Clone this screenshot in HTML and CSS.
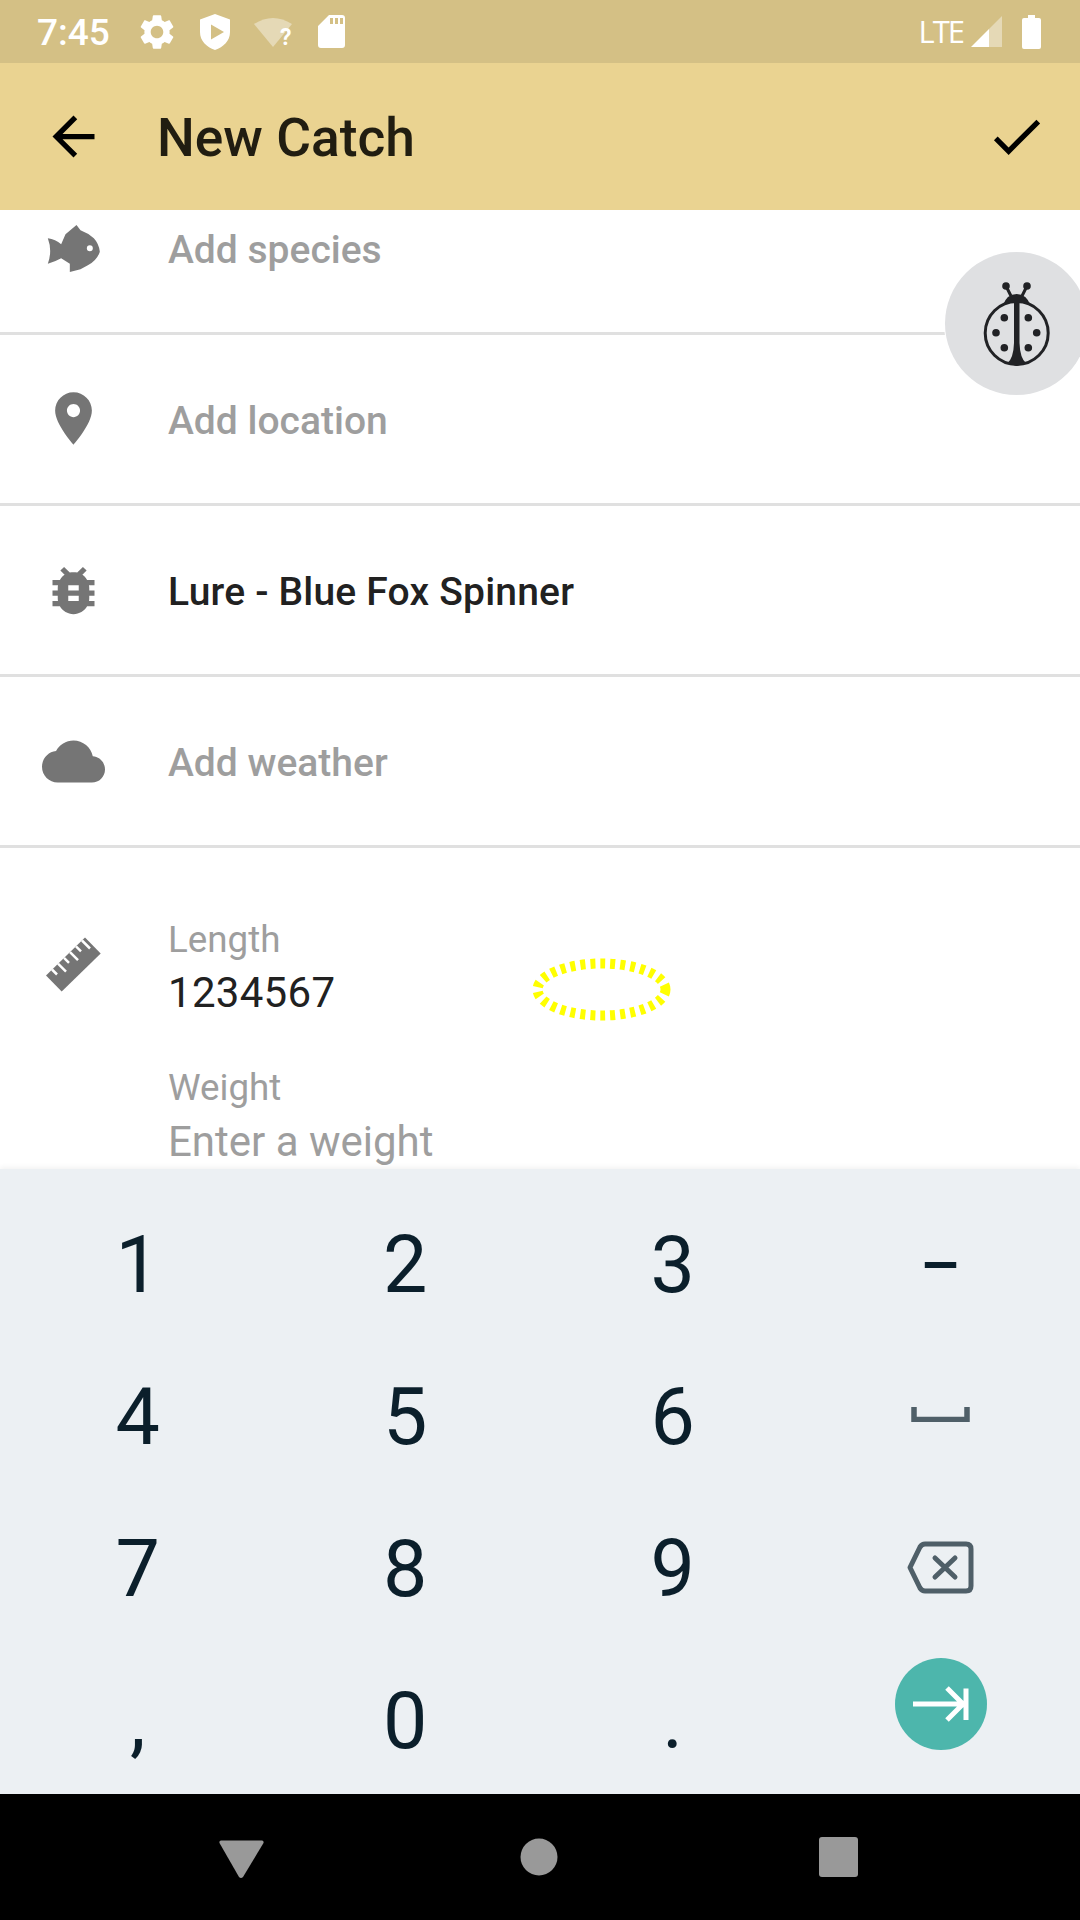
FILE: index.html
```html
<!DOCTYPE html>
<html lang="en">
<head>
    <meta charset="UTF-8">
    <meta name="viewport" content="width=device-width, initial-scale=1.0">
    <title>New Catch</title>
    <link rel="stylesheet" href="styles.css">
</head>
<body>
    <div class="screen">
        <div class="statusbar">
            <span class="time">7:45</span>
            <svg class="st-gear" viewBox="0 0 24 24"><path d="M19.14 12.94c.04-.3.06-.61.06-.94 0-.32-.02-.64-.07-.94l2.03-1.58c.18-.14.23-.41.12-.61l-1.92-3.32c-.12-.22-.37-.29-.59-.22l-2.39.96c-.5-.38-1.03-.7-1.62-.94l-.36-2.54c-.04-.24-.24-.41-.48-.41h-3.84c-.24 0-.43.17-.47.41l-.36 2.54c-.59.24-1.13.57-1.62.94l-2.39-.96c-.22-.08-.47 0-.59.22L2.74 8.87c-.12.21-.08.47.12.61l2.03 1.58c-.05.3-.09.63-.09.94s.02.64.07.94l-2.03 1.58c-.18.14-.23.41-.12.61l1.92 3.32c.12.22.37.29.59.22l2.39-.96c.5.38 1.03.7 1.62.94l.36 2.54c.05.24.24.41.48.41h3.84c.24 0 .44-.17.47-.41l.36-2.54c.59-.24 1.13-.56 1.62-.94l2.39.96c.22.08.47 0 .59-.22l1.92-3.32c.12-.22.07-.47-.12-.61l-2.01-1.58zM12 15.6c-1.98 0-3.6-1.62-3.6-3.6s1.62-3.6 3.6-3.6 3.6 1.62 3.6 3.6-1.62 3.6-3.6 3.6z"/></svg>
            <svg class="st-shield" viewBox="0 0 30 36"><path fill-rule="evenodd" d="M15 0L30 5.5V18C30 27 23.500 33 15 36C6.500 33 0 27 0 18V5.500ZM11 10.500V25.500L24 18Z"/></svg>
            <span class="st-wifi">
                <svg viewBox="0 0 38 30"><path opacity=".4" d="M0 7Q19-5 38 7L19 30Z"/></svg>
                <span class="wifi-q">?</span>
            </span>
            <svg class="st-sd" viewBox="0 0 27 33"><path fill-rule="evenodd" d="M11 0H24Q27 0 27 3V30Q27 33 24 33H3Q0 33 0 30V11ZM12 3V9H15V3ZM17 3V9H20V3ZM22 3V9H25V3Z"/></svg>
            <span class="lte">LTE</span>
            <svg class="st-signal" viewBox="0 0 31 31"><path opacity=".4" d="M18 13L31 0V31H18Z"/><path d="M0 31L18 13V31Z"/></svg>
            <svg class="st-battery" viewBox="0 0 19 34"><path d="M6 0H13V3H17Q19 3 19 5V32Q19 34 17 34H2Q0 34 0 32V5Q0 3 2 3H6Z"/></svg>
        </div>

        <div class="appbar">
            <svg class="back" viewBox="0 0 24 24"><path d="M20 11H7.830l5.590-5.590L12 4l-8 8 8 8 1.410-1.410L7.830 13H20v-2z"/></svg>
            <h1 class="title">New Catch</h1>
            <svg class="done" viewBox="0 0 24 24"><path d="M9 16.170L4.830 12l-1.420 1.410L9 19 21 7l-1.410-1.410z"/></svg>
        </div>

        <div class="content">
            <div class="list">
                <div class="row">
                    <svg class="icon" viewBox="0 0 63 63"><g transform="translate(-11.500 -6) scale(.3333)"><path fill-rule="evenodd" d="M52 82Q75 85 92 100L105 70L138 42L150 58Q172 66 190 82Q205 98 208 122Q200 148 172 163L150 175L118 183L118 158L92 142Q75 152 52 158Q66 120 52 82ZM178 103A9 9 0 1 0 178 121A9 9 0 1 0 178 103Z"/></g></svg>
                    <span class="row-text">Add species</span>
                </div>
                <div class="row">
                    <svg class="icon" viewBox="0 .4 24 24"><path d="M12 2C8.130 2 5 5.130 5 9c0 5.250 7 13 7 13s7-7.750 7-13c0-3.870-3.130-7-7-7zm0 9.500c-1.380 0-2.500-1.120-2.500-2.500s1.120-2.500 2.500-2.500 2.500 1.120 2.500 2.500-1.120 2.500-2.500 2.500z"/></svg>
                    <span class="row-text">Add location</span>
                </div>
                <div class="row">
                    <svg class="icon" viewBox="0 0 24 24"><path d="M20 8h-2.810c-.45-.78-1.070-1.450-1.820-1.960L17 4.410 15.590 3l-2.170 2.170C12.960 5.060 12.490 5 12 5c-.49 0-.96.06-1.410.17L8.410 3 7 4.410l1.620 1.630C7.880 6.550 7.260 7.220 6.810 8H4v2h2.090c-.05.33-.09.66-.09 1v1H4v2h2v1c0 .34.04.67.09 1H4v2h2.810c1.040 1.790 2.970 3 5.190 3s4.150-1.210 5.190-3H20v-2h-2.090c.05-.33.09-.66.09-1v-1h2v-2h-2v-1c0-.34-.04-.67-.09-1H20V8zm-6 8h-4v-2h4v2zm0-4h-4v-2h4v2z"/></svg>
                    <span class="row-text filled">Lure - Blue Fox Spinner</span>
                </div>
                <div class="row">
                    <svg class="icon" viewBox="0 0 24 24"><path d="M19.350 10.040C18.670 6.590 15.640 4 12 4 9.110 4 6.600 5.640 5.350 8.040 2.340 8.360 0 10.910 0 14c0 3.310 2.690 6 6 6h13c2.760 0 5-2.240 5-5 0-2.640-2.050-4.780-4.650-4.960z"/></svg>
                    <span class="row-text">Add weather</span>
                </div>
            </div>

            <div class="form">
                <svg class="icon ruler" viewBox="0 0 63 63">
                    <path d="M43 4.500L58.700 20.500L19.700 58.500L4 42.500Z"/>
                    <g class="ticks">
                        <path d="M10 36.500L15 41.500"/>
                        <path d="M16 30.700L24 38.700"/>
                        <path d="M22 24.900L27 29.900"/>
                        <path d="M28 19.100L36 27.100"/>
                        <path d="M34 13.300L39 18.300"/>
                        <path d="M40 7.500L48 15.500"/>
                    </g>
                </svg>
                <div class="fields">
                    <div class="field">
                        <div class="field-label">Length</div>
                        <div class="field-value digits">1234567</div>
                    </div>
                    <div class="field">
                        <div class="field-label">Weight</div>
                        <div class="field-value hint">Enter a weight</div>
                    </div>
                </div>
                <svg class="touch-ring" viewBox="0 0 139 63"><ellipse cx="69.500" cy="31.500" rx="64" ry="26"/></svg>
            </div>

            <div class="bug-button">
                <svg viewBox="0 0 105 105">
                    <circle cx="51.700" cy="62" r="31.500" class="bug-line"/>
                    <path d="M46 25L41 15M57 25L62 15" class="bug-line"/>
                    <circle cx="41" cy="15" r="3.800"/>
                    <circle cx="62" cy="15" r="3.800"/>
                    <path d="M38 34Q42 23 51.700 23Q61 23 65.500 34Q60 31.500 54.500 31.500V72Q55 87 61 92L51.700 95L42.500 92Q48.500 87 49 72V31.500Q43 31.500 38 34Z"/>
                    <circle cx="39.300" cy="46.700" r="3.800"/>
                    <circle cx="63.300" cy="46.700" r="3.800"/>
                    <circle cx="31" cy="61.700" r="3.800"/>
                    <circle cx="71.700" cy="61.700" r="3.800"/>
                    <circle cx="39.300" cy="76.700" r="3.800"/>
                    <circle cx="63.300" cy="76.700" r="3.800"/>
                </svg>
            </div>
        </div>

        <div class="keyboard">
            <div class="key">1</div>
            <div class="key">2</div>
            <div class="key">3</div>
            <div class="key dash">–</div>
            <div class="key">4</div>
            <div class="key">5</div>
            <div class="key">6</div>
            <div class="key">
                <svg class="key-space" viewBox="0 0 59 15"><path d="M3 0V12.500H56V0" /></svg>
            </div>
            <div class="key">7</div>
            <div class="key">8</div>
            <div class="key">9</div>
            <div class="key">
                <svg class="key-back" viewBox="0 0 67 53"><path class="outline" d="M18 3H59Q64 3 64 8V45Q64 50 59 50H18Q15 50 13 47L3 26.500L13 6Q15 3 18 3Z"/><path class="outline" d="M28 17L48 36M48 17L28 36"/></svg>
            </div>
            <div class="key">,</div>
            <div class="key">0</div>
            <div class="key">.</div>
            <div class="key enter-key">
                <div class="enter">
                    <svg viewBox="0 0 92 92"><path d="M18 46H70M52 30L68 46L52 62M71 30.500V62"/></svg>
                </div>
            </div>
        </div>

        <div class="navbar">
            <svg viewBox="0 0 60 60"><path d="M10 13.500H51Q53 13.500 52.500 16L32 50Q30 52 28 50L8.500 16Q8 13.500 10 13.500Z"/></svg>
            <svg viewBox="0 0 60 60"><circle cx="29" cy="30" r="18.500"/></svg>
            <svg viewBox="0 0 60 60"><rect x="10" y="10" width="39" height="40" rx="3"/></svg>
        </div>
    </div>
</body>
</html>
```

FILE: styles.css
```css
* {
    box-sizing: border-box;
}
body {
    margin: 0;
    font-family: Roboto, sans-serif;
    background-color: #fff;
}
.screen {
    width: 1080px;
    height: 1920px;
    display: flex;
    flex-direction: column;
    overflow: hidden;
}

/* status bar */
.statusbar {
    height: 63px;
    flex: none;
    display: flex;
    align-items: center;
    padding-left: 37px;
    background-color: #d4c085;
    color: #fff;
    fill: #fff;
}
.time {
    font-size: 37px;
    font-weight: 500;
    width: 99px;
    padding-top: 2px;
}
.st-gear {
    width: 42px;
    height: 42px;
}
.st-shield {
    width: 30px;
    height: 36px;
    margin-left: 22px;
}
.st-wifi {
    position: relative;
    width: 38px;
    height: 30px;
    margin-left: 24px;
}
.st-wifi svg {
    display: block;
    width: 38px;
    height: 30px;
}
.wifi-q {
    position: absolute;
    left: 26px;
    top: 11px;
    font-size: 23px;
    line-height: 20px;
    font-weight: 700;
}
.st-sd {
    width: 27px;
    height: 33px;
    margin-left: 26px;
}
.lte {
    font-family: "Open Sans", sans-serif;
    font-size: 31px;
    letter-spacing: -2px;
    margin: -2px 0 0 auto;
}
.st-signal {
    width: 31px;
    height: 31px;
    margin-left: 8px;
}
.st-battery {
    width: 19px;
    height: 34px;
    margin-left: 20px;
    margin-right: 39px;
}

/* app bar */
.appbar {
    height: 147px;
    flex: none;
    display: flex;
    align-items: center;
    padding-left: 42px;
    background-color: #ead391;
}
.back {
    width: 63px;
    height: 63px;
}
.title {
    margin: 2px 0 0 52px;
    font-size: 53.300px;
    font-weight: 500;
    color: #211d11;
}
.done {
    width: 63px;
    height: 63px;
    margin-left: auto;
    margin-right: 32px;
}

/* scrolled content */
.content {
    flex: 1;
    position: relative;
    overflow: hidden;
    background-color: #fff;
}
.list {
    margin-top: -46px;
}
.row {
    height: 171px;
    display: flex;
    align-items: center;
    padding-left: 42px;
    border-bottom: 3px solid #e0e0e0;
}
.icon {
    width: 63px;
    height: 63px;
    flex: none;
    fill: #757575;
}
.row-text {
    margin: 3px 0 0 63px;
    font-size: 39px;
    font-weight: 500;
    color: #9e9e9e;
}
.row-text.filled {
    color: #212121;
    letter-spacing: .2px;
}

.form {
    position: relative;
    display: flex;
    padding: 71px 0 0 42px;
}
.ruler {
    margin-top: 14px;
}
.ticks path {
    stroke: #fff;
    stroke-width: 2.500;
}
.fields {
    margin-left: 63px;
}
.field {
    margin-bottom: 41px;
}
.field-label {
    font-size: 36.750px;
    line-height: 42px;
    color: #9e9e9e;
}
.field-value {
    font-size: 42px;
    line-height: 66px;
    color: #212121;
}
.field-value.digits {
    letter-spacing: .3px;
    margin-top: -1px;
}
.field-value.hint {
    color: #9e9e9e;
}
.touch-ring {
    position: absolute;
    left: 532px;
    top: 110px;
    width: 139px;
    height: 63px;
}
.touch-ring ellipse {
    fill: none;
    stroke: #ffff00;
    stroke-width: 10;
    stroke-dasharray: 5 5;
}

/* floating debug button */
.bug-button {
    position: absolute;
    left: 945px;
    top: 42px;
    width: 143px;
    height: 143px;
    border-radius: 50%;
    background-color: #dfe0e2;
    box-shadow: 0 0 0 1px #fff;
    padding: 19px 0 0 20px;
    fill: #212225;
}
.bug-button svg {
    display: block;
    width: 105px;
    height: 105px;
}
.bug-line {
    fill: none;
    stroke: #212225;
    stroke-width: 3;
}

/* number keyboard */
.keyboard {
    height: 625px;
    flex: none;
    position: relative;
    display: grid;
    grid-template-columns: repeat(4, 1fr);
    grid-auto-rows: 152px;
    padding: 20px 6px 0 4px;
    background-color: #ecf0f3;
    box-shadow: 0 -2px 5px rgba(0, 0, 0, .05);
}
.key {
    display: flex;
    align-items: center;
    justify-content: center;
    font-size: 79px;
    color: #0b1f2b;
}
.dash {
    font-size: 63px;
    font-weight: 500;
}
.key-space {
    width: 59px;
    height: 15px;
    margin-top: -5px;
}
.key-space path {
    fill: none;
    stroke: #4f5f68;
    stroke-width: 5.500;
}
.key-back {
    width: 67px;
    height: 53px;
    margin-top: -3px;
}
.outline {
    fill: none;
    stroke: #4f5f68;
    stroke-width: 5;
    stroke-linecap: round;
    stroke-linejoin: round;
}
.enter-key {
    align-items: flex-start;
}
.enter {
    width: 92px;
    height: 92px;
    margin: 13px 0 0 2px;
    border-radius: 50%;
    background-color: #4db6ac;
}
.enter svg {
    display: block;
    width: 92px;
    height: 92px;
    fill: none;
    stroke: #fff;
    stroke-width: 5;
}

/* nav bar */
.navbar {
    height: 126px;
    flex: none;
    display: flex;
    align-items: center;
    gap: 239px;
    padding-left: 211px;
    background-color: #000;
    fill: #999;
}
.navbar svg {
    width: 60px;
    height: 60px;
}
```
